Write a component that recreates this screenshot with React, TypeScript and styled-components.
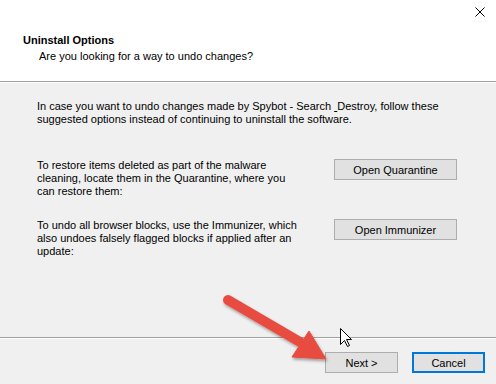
import React from "react";
import styled, { createGlobalStyle } from "styled-components";

const Global = createGlobalStyle`
  html, body { margin: 0; padding: 0; background: #f0f0f0; }
  body { font-family: "Liberation Sans", Arial, sans-serif; }
  #root { width: 496px; height: 384px; overflow: hidden; }
`;

const Window = styled.div`
  position: relative;
  width: 496px;
  height: 384px;
  display: flex;
  flex-direction: column;
  background: #f0f0f0;
  color: #000;
  font-size: 11px;
  line-height: 13px;
`;

const Header = styled.header`
  height: 81px;
  flex-shrink: 0;
  background: #ffffff;
  display: flex;
  flex-direction: column;
`;

const CloseRow = styled.div`
  height: 17px;
  padding: 7px 11px 0 0;
  display: flex;
  justify-content: flex-end;
  align-items: flex-start;
`;

const Title = styled.div`
  margin-top: 10px;
  padding-left: 23px;
  font-weight: bold;
`;

const Subtitle = styled.div`
  margin-top: 3px;
  padding-left: 39px;
`;

const Separator = styled.div`
  height: 0;
  flex-shrink: 0;
  border-top: 1px solid #a0a0a0;
  border-bottom: 1px solid #ffffff;
`;

const Body = styled.main`
  flex: 1;
  padding: 17px 0 0 37px;
  display: flex;
  flex-direction: column;
`;

const Paragraph = styled.p`
  margin: 0;
  white-space: nowrap;
`;

const OptionRow = styled.div<{ $gap: number }>`
  margin-top: ${(p) => p.$gap}px;
  display: grid;
  grid-template-columns: 297px 123px;
  align-items: start;
`;

const Accel = styled.span`
  text-decoration: underline;
`;

const Button = styled.button<{ $width: number; $default?: boolean }>`
  box-sizing: border-box;
  width: ${(p) => p.$width}px;
  height: 21px;
  margin: 0;
  padding: 0;
  background: #e1e1e1;
  border: ${(p) => (p.$default ? "2px solid #0078d7" : "1px solid #adadad")};
  font-family: inherit;
  font-size: 11px;
  color: #000;
  display: flex;
  align-items: center;
  justify-content: center;
`;

const Footer = styled.footer`
  height: 45px;
  flex-shrink: 0;
  box-sizing: border-box;
  padding: 13px 11px 0 0;
  display: flex;
  justify-content: flex-end;
  align-items: flex-start;
  gap: 14px;
`;

const Overlay = styled.svg`
  position: absolute;
  left: 0;
  top: 0;
  pointer-events: none;
`;

export default function App() {
  return (
    <>
      <Global />
      <Window>
        <Header>
          <CloseRow>
            <svg width="10" height="10" viewBox="0 0 10 10">
              <path d="M0.5 0.5 L9.5 9.5 M9.5 0.5 L0.5 9.5" stroke="#000" strokeWidth="1" />
            </svg>
          </CloseRow>
          <Title>Uninstall Options</Title>
          <Subtitle>Are you looking for a way to undo changes?</Subtitle>
        </Header>
        <Separator />
        <Body>
          <Paragraph>
            In case you want to undo changes made by Spybot - Search <Accel>&nbsp;</Accel>Destroy, follow these
            <br />
            suggested options instead of continuing to uninstall the software.
          </Paragraph>
          <OptionRow $gap={33}>
            <Paragraph>
              To restore items deleted as part of the malware
              <br />
              cleaning, locate them in the Quarantine, where you
              <br />
              can restore them:
            </Paragraph>
            <Button $width={123}>Open Quarantine</Button>
          </OptionRow>
          <OptionRow $gap={21}>
            <Paragraph>
              To undo all browser blocks, use the Immunizer, which
              <br />
              also undoes falsely flagged blocks if applied after an
              <br />
              update:
            </Paragraph>
            <Button $width={123}>Open Immunizer</Button>
          </OptionRow>
        </Body>
        <Separator />
        <Footer>
          <Button $width={73}>Next &gt;</Button>
          <Button $width={73} $default>
            Cancel
          </Button>
        </Footer>
        <Overlay width="496" height="384" viewBox="0 0 496 384">
          <defs>
            <filter id="shadow" x="-20%" y="-20%" width="140%" height="140%">
              <feDropShadow dx="1" dy="2" stdDeviation="1.5" floodColor="#000" floodOpacity="0.35" />
            </filter>
          </defs>
          <g filter="url(#shadow)" fill="#e84c3f" stroke="#e84c3f">
            <line x1="228" y1="300" x2="300" y2="342" strokeWidth="10" strokeLinecap="round" />
            <polygon points="309,331 292,357 326,359" strokeWidth="1" strokeLinejoin="round" />
          </g>
          <path
            d="M340.5 328.5 L340.5 344.5 L344.5 340.5 L347.5 346.5 L349.5 345.5 L346.5 339.5 L351.5 339.5 Z"
            fill="#fff"
            stroke="#000"
            strokeWidth="1"
            strokeLinejoin="miter"
          />
        </Overlay>
      </Window>
    </>
  );
}
